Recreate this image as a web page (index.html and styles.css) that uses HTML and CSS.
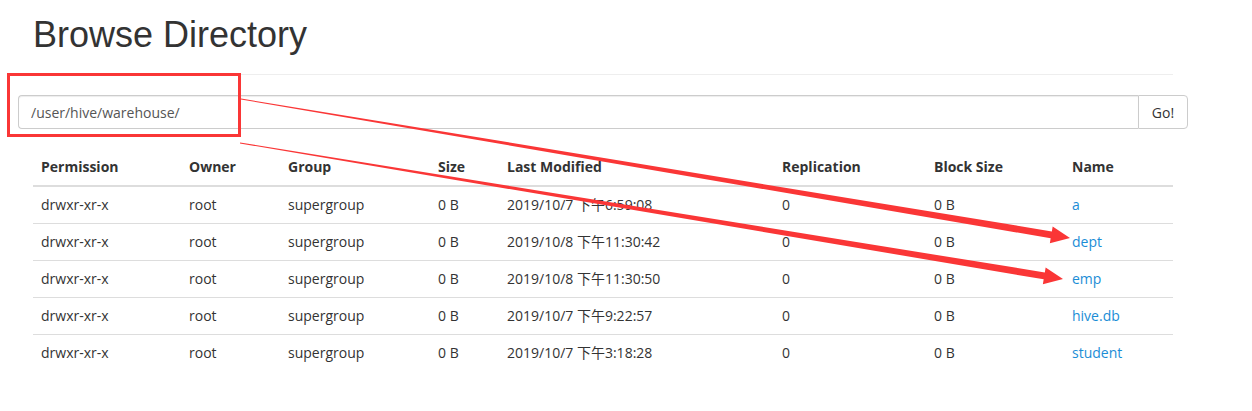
FILE: index.html
```html
<!DOCTYPE html>
<html>
<head>
<meta charset="utf-8">
<title>Browse Directory</title>
<link rel="stylesheet" href="styles.css">
</head>
<body>
<div class="page">
  <div class="page-header">
    <h1>Browse Directory</h1>
  </div>
  <form class="input-group">
    <input class="path-input" type="text" value="/user/hive/warehouse/">
    <button class="go-btn" type="button">Go!</button>
  </form>
  <table class="listing">
    <colgroup>
      <col class="c-perm"><col class="c-owner"><col class="c-group"><col class="c-size">
      <col class="c-mod"><col class="c-rep"><col class="c-block"><col class="c-name">
    </colgroup>
    <thead>
      <tr><th>Permission</th><th>Owner</th><th>Group</th><th>Size</th><th>Last Modified</th><th>Replication</th><th>Block Size</th><th>Name</th></tr>
    </thead>
    <tbody>
      <tr><td>drwxr-xr-x</td><td>root</td><td>supergroup</td><td>0 B</td><td>2019/10/7 下午6:59:08</td><td>0</td><td>0 B</td><td><a href="#">a</a></td></tr>
      <tr><td>drwxr-xr-x</td><td>root</td><td>supergroup</td><td>0 B</td><td>2019/10/8 下午11:30:42</td><td>0</td><td>0 B</td><td><a href="#">dept</a></td></tr>
      <tr><td>drwxr-xr-x</td><td>root</td><td>supergroup</td><td>0 B</td><td>2019/10/8 下午11:30:50</td><td>0</td><td>0 B</td><td><a href="#">emp</a></td></tr>
      <tr><td>drwxr-xr-x</td><td>root</td><td>supergroup</td><td>0 B</td><td>2019/10/7 下午9:22:57</td><td>0</td><td>0 B</td><td><a href="#">hive.db</a></td></tr>
      <tr><td>drwxr-xr-x</td><td>root</td><td>supergroup</td><td>0 B</td><td>2019/10/7 下午3:18:28</td><td>0</td><td>0 B</td><td><a href="#">student</a></td></tr>
    </tbody>
  </table>
</div>
<svg class="annotations" width="1252" height="411" viewBox="0 0 1252 411">
  <rect x="8.5" y="74.5" width="231" height="61" fill="none" stroke="#fa3636" stroke-width="3"/>
  <polygon fill="#fa3636" points="241.08,98.51 1051.84,231.41 1052.67,226.48 1070,238 1049.85,243.24 1050.68,238.31 240.92,99.49"/>
  <polygon fill="#fa3636" points="240.08,142.51 1044.82,272.45 1045.64,267.51 1063,279 1042.86,284.29 1043.68,279.35 239.92,143.49"/>
</svg>
</body>
</html>
```
FILE: styles.css
```css
html, body {
  margin: 0;
  padding: 0;
  background: #fff;
}
body {
  font-family: "Open Sans", "Noto Sans CJK SC", sans-serif;
  font-size: 14px;
  line-height: 20px;
  color: #333;
  position: relative;
  width: 1252px;
  height: 411px;
  overflow: hidden;
}
.page {
  width: 1140px;
  padding-left: 33px;
}
.page-header {
  padding-top: 15px;
  padding-bottom: 19px;
  border-bottom: 1px solid #eee;
}
.page-header h1 {
  margin: 0;
  font-family: "Liberation Sans", Arial, sans-serif;
  font-weight: normal;
  font-size: 36px;
  line-height: 40px;
  color: #333;
}
.input-group {
  display: flex;
  margin: 20px -15px 0 -15px;
  height: 34px;
}
.path-input {
  flex: 1;
  box-sizing: border-box;
  height: 34px;
  margin: 0;
  padding: 6px 12px;
  font-family: "Open Sans", sans-serif;
  font-size: 14px;
  color: #555;
  border: 1px solid #ccc;
  border-right: none;
  border-radius: 4px 0 0 4px;
  box-shadow: inset 0 1px 1px rgba(0,0,0,0.075);
  outline: none;
}
.go-btn {
  box-sizing: border-box;
  width: 50px;
  height: 34px;
  margin: 0;
  padding: 0;
  font-family: "Open Sans", sans-serif;
  font-size: 14px;
  color: #333;
  background: #fff;
  border: 1px solid #ccc;
  border-radius: 0 4px 4px 0;
}
.listing {
  width: 1140px;
  margin-top: 20px;
  border-collapse: collapse;
  table-layout: fixed;
}
.c-perm { width: 148px; }
.c-owner { width: 99px; }
.c-group { width: 150px; }
.c-size { width: 69px; }
.c-mod { width: 275px; }
.c-rep { width: 152px; }
.c-block { width: 138px; }
.c-name { width: 109px; }
.listing th {
  text-align: left;
  font-weight: bold;
  padding: 8px;
  border-bottom: 2px solid #ddd;
  white-space: nowrap;
}
.listing td {
  padding: 8px;
  border-top: 1px solid #ddd;
  white-space: nowrap;
}
.listing a {
  color: #1b8dd6;
  text-decoration: none;
}
.annotations {
  position: absolute;
  left: 0;
  top: 0;
  pointer-events: none;
}
```
